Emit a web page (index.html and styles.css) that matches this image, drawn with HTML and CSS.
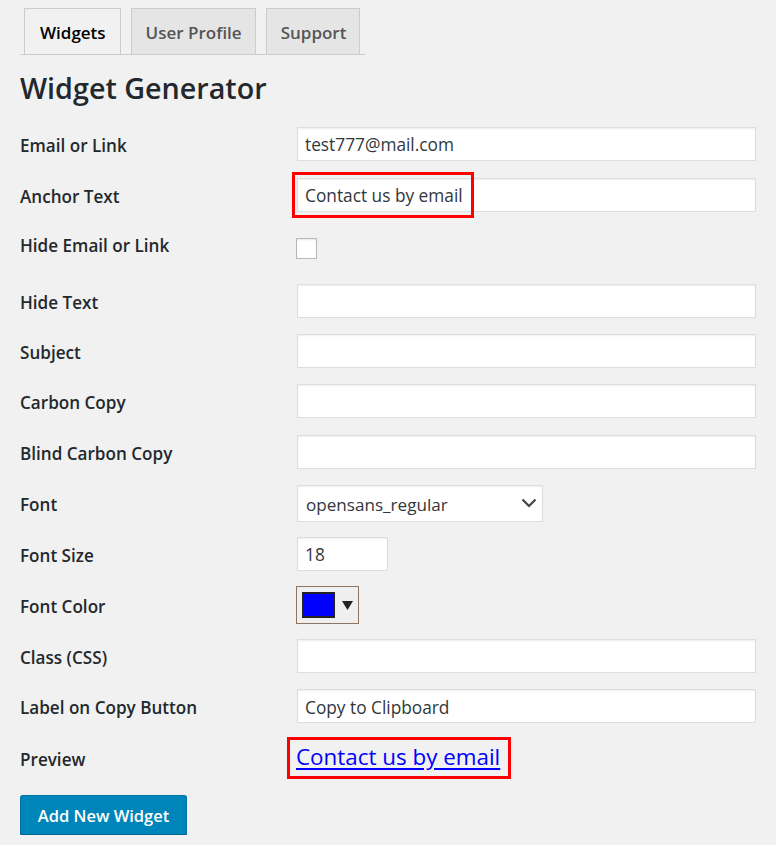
FILE: index.html
```html
<!DOCTYPE html>
<html lang="en">
<head>
<meta charset="utf-8">
<title>Widget Generator</title>
<link rel="stylesheet" href="styles.css">
</head>
<body>
<div class="wrap">
  <nav class="tabs">
    <a class="tab tab-active" href="#">Widgets</a>
    <a class="tab" href="#">User Profile</a>
    <a class="tab" href="#">Support</a>
  </nav>
  <h1 class="title">Widget Generator</h1>
  <form class="form">
    <div class="row h51">
      <label class="label">Email or Link</label>
      <div class="field"><input class="input" type="text" value="test777@mail.com"></div>
    </div>
    <div class="row h51">
      <label class="label">Anchor Text</label>
      <div class="field field-mark">
        <input class="input" type="text" value="Contact us by email">
        <span class="mark"></span>
      </div>
    </div>
    <div class="row h56">
      <label class="label label-up">Hide Email or Link</label>
      <div class="field"><input class="check" type="checkbox"></div>
    </div>
    <div class="row h50">
      <label class="label">Hide Text</label>
      <div class="field"><input class="input" type="text"></div>
    </div>
    <div class="row h50">
      <label class="label">Subject</label>
      <div class="field"><input class="input" type="text"></div>
    </div>
    <div class="row h50">
      <label class="label">Carbon Copy</label>
      <div class="field"><input class="input" type="text"></div>
    </div>
    <div class="row h51">
      <label class="label">Blind Carbon Copy</label>
      <div class="field"><input class="input" type="text"></div>
    </div>
    <div class="row h52">
      <label class="label">Font</label>
      <div class="field">
        <div class="select-wrap">
          <select class="select"><option>opensans_regular</option></select>
          <svg class="chev" width="16" height="10" viewBox="0 0 16 10"><polyline points="1.5,1.5 8,8 14.5,1.5" fill="none" stroke="#444" stroke-width="2.2"/></svg>
        </div>
      </div>
    </div>
    <div class="row h49">
      <label class="label">Font Size</label>
      <div class="field"><input class="input input-num" type="text" value="18"></div>
    </div>
    <div class="row h53">
      <label class="label">Font Color</label>
      <div class="field">
        <button class="color-btn" type="button">
          <span class="swatch"></span>
          <svg class="tri" width="11" height="9" viewBox="0 0 11 9"><polygon points="0,0 11,0 5.5,9" fill="#222"/></svg>
        </button>
      </div>
    </div>
    <div class="row h50">
      <label class="label">Class (CSS)</label>
      <div class="field"><input class="input" type="text"></div>
    </div>
    <div class="row h50">
      <label class="label">Label on Copy Button</label>
      <div class="field"><input class="input" type="text" value="Copy to Clipboard"></div>
    </div>
    <div class="row h54">
      <label class="label">Preview</label>
      <div class="field">
        <span class="preview-box"><a class="preview-link" href="#">Contact us by email</a></span>
      </div>
    </div>
    <button class="btn-primary" type="button">Add New Widget</button>
  </form>
</div>
</body>
</html>
```

FILE: styles.css
```css
* { box-sizing: border-box; }

html, body {
  margin: 0;
  padding: 0;
  background: #f1f1f1;
}

body {
  font-family: "Open Sans", "Noto Sans", sans-serif;
  color: #23282d;
}

.wrap {
  padding: 8px 0 0 20px;
}

.tabs {
  display: flex;
  width: 345px;
  border-bottom: 1px solid #ccc;
  padding-left: 4px;
  gap: 10px;
}

.tab {
  display: block;
  height: 46px;
  line-height: 47px;
  padding: 0 13px 0 14px;
  border: 1px solid #ccc;
  border-bottom: 0;
  background: #e5e5e5;
  color: #555;
  font-size: 17px;
  font-weight: 600;
  text-decoration: none;
}

.tab-active {
  background: #f1f1f1;
  color: #000;
  padding: 0 14px 0 15px;
}

.title {
  margin: 15px 0 12px;
  font-size: 28.7px;
  line-height: 36px;
  font-weight: 600;
  color: #23282d;
}

.form {
  margin: 0;
}

.row {
  display: flex;
  align-items: center;
}

.h49 { height: 49px; }
.h50 { height: 50px; }
.h51 { height: 51px; }
.h52 { height: 52px; }
.h53 { height: 53px; }
.h54 { height: 54px; }
.h56 { height: 56px; }

.label {
  width: 277px;
  flex: none;
  padding-top: 3px;
  font-size: 17.1px;
  font-weight: 600;
  color: #23282d;
}

.label-up {
  padding-top: 0;
  padding-bottom: 6px;
}

.field {
  flex: none;
  display: flex;
  align-items: center;
}

.field-mark {
  position: relative;
}

.input {
  width: 459px;
  height: 34px;
  margin: 0;
  padding: 2px 7px 0;
  border: 1px solid #ddd;
  background: #fff;
  box-shadow: inset 0 1px 2px rgba(0, 0, 0, 0.07);
  font-family: inherit;
  font-size: 17.3px;
  color: #32373c;
  outline: none;
}

.input-num {
  width: 91px;
}

.mark {
  position: absolute;
  left: -5px;
  top: -6px;
  width: 182px;
  height: 46px;
  border: 3px solid #f00;
  pointer-events: none;
}

.check {
  appearance: none;
  -webkit-appearance: none;
  width: 21px;
  height: 21px;
  margin: 0 0 0 -1px;
  border: 1px solid #b4b9be;
  background: #fff;
  box-shadow: inset 0 1px 2px rgba(0, 0, 0, 0.1);
}

.select-wrap {
  position: relative;
  width: 246px;
  height: 37px;
}

.select {
  appearance: none;
  -webkit-appearance: none;
  width: 100%;
  height: 100%;
  margin: 0;
  padding: 2px 30px 0 8px;
  border: 1px solid #ddd;
  background: #fff;
  box-shadow: inset 0 1px 2px rgba(0, 0, 0, 0.07);
  font-family: inherit;
  font-size: 17.1px;
  color: #32373c;
}

.chev {
  position: absolute;
  right: 6px;
  top: 13px;
  pointer-events: none;
}

.color-btn {
  display: flex;
  align-items: center;
  width: 63px;
  height: 38px;
  margin: 0 0 0 -1px;
  padding: 0 0 0 5px;
  border: 1px solid #8f7560;
  background: #efefef;
  cursor: pointer;
}

.swatch {
  display: block;
  width: 33px;
  height: 26px;
  background: #00f;
  border: 2px solid #222;
}

.tri {
  margin-left: 7px;
  margin-top: 2px;
}

.preview-box {
  display: inline-block;
  margin-left: -10px;
  padding: 0 8px 0 6px;
  border: 3px solid #f00;
  height: 42px;
  line-height: 34px;
}

.preview-link {
  font-size: 22.4px;
  color: #00f;
  text-decoration: underline;
  text-underline-offset: 3px;
}

.btn-primary {
  display: block;
  margin: 10px 0 0;
  width: 167px;
  height: 40px;
  padding: 0;
  border: 1px solid #0073aa;
  border-bottom-color: #006799;
  border-radius: 3px;
  background: #0085ba;
  box-shadow: 0 1px 0 #006799;
  color: #fff;
  font-family: inherit;
  font-size: 16.5px;
  font-weight: 600;
  cursor: pointer;
}
```
